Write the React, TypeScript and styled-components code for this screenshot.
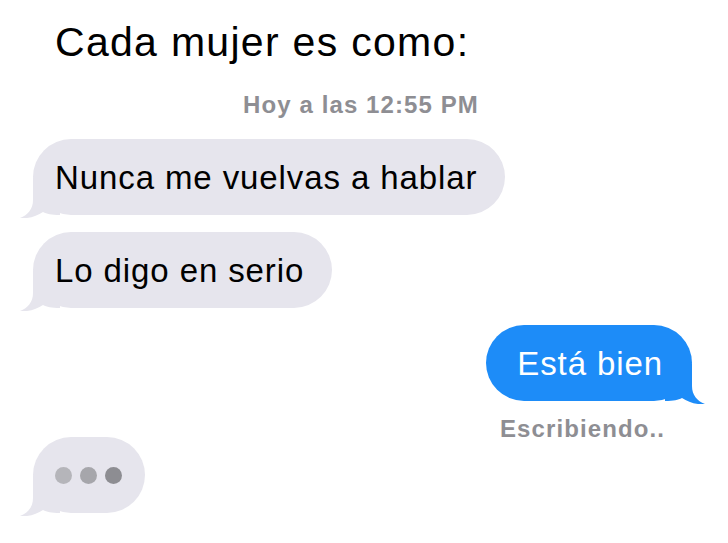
import styled, { createGlobalStyle } from "styled-components";

const GlobalStyle = createGlobalStyle`
  html, body {
    margin: 0;
    padding: 0;
    background: #ffffff;
  }
  body {
    font-family: "Liberation Sans", Arial, Helvetica, sans-serif;
  }
`;

const GRAY = "#e6e5ed";
const BLUE = "#1d8cf8";

type Side = "left" | "right";

const Page = styled.div`
  width: 728px;
  height: 543px;
  box-sizing: border-box;
  padding: 18px 0 0 0;
  display: flex;
  flex-direction: column;
  overflow: hidden;
`;

const Title = styled.h1`
  margin: 0 0 0 55px;
  font-size: 41px;
  font-weight: 400;
  letter-spacing: 1.3px;
  line-height: 48px;
  color: #000;
`;

const Stamp = styled.div`
  margin: 26px 0 21px 0;
  padding-right: 6px;
  text-align: center;
  font-size: 24px;
  font-weight: 700;
  letter-spacing: 1.1px;
  line-height: 26px;
  color: #8e8e93;
`;

const Row = styled.div<{ $side: Side; $gap?: number }>`
  display: flex;
  justify-content: ${(p) => (p.$side === "left" ? "flex-start" : "flex-end")};
  padding: ${(p) => (p.$side === "left" ? "0 0 0 33px" : "0 36px 0 0")};
  margin-bottom: ${(p) => p.$gap ?? 17}px;
`;

const Bubble = styled.div<{ $side: Side; $compact?: boolean }>`
  position: relative;
  height: 76px;
  box-sizing: border-box;
  display: inline-flex;
  align-items: center;
  padding: ${(p) =>
    p.$compact
      ? "0 23px 0 22px"
      : p.$side === "left"
        ? "0 28px 0 22px"
        : "0 29px 0 31px"};
  border-radius: 38px;
  background: ${(p) => (p.$side === "left" ? GRAY : BLUE)};
  color: ${(p) => (p.$side === "left" ? "#000" : "#fff")};
  font-size: 33px;
  letter-spacing: 0.9px;
  line-height: 1;
`;

const Tail = styled.svg<{ $side: Side }>`
  position: absolute;
  bottom: -3px;
  width: 40px;
  height: 40px;
  ${(p) =>
    p.$side === "left"
      ? "left: -13px;"
      : "right: -13px; transform: scaleX(-1);"}
`;

const Text = styled.span`
  position: relative;
`;

const Label = styled.div`
  align-self: flex-end;
  margin-right: 63px;
  font-size: 24px;
  font-weight: 700;
  letter-spacing: 1.1px;
  line-height: 22px;
  color: #8e8e93;
  margin-bottom: -3px;
`;

const Dots = styled.div`
  position: relative;
  display: flex;
  gap: 8px;
`;

const Dot = styled.span<{ $tone: string }>`
  width: 17px;
  height: 17px;
  border-radius: 50%;
  background: ${(p) => p.$tone};
`;

const TailShape = ({ side, color }: { side: Side; color: string }) => (
  <Tail $side={side} viewBox="0 0 40 40">
    <path
      d="M13 0 L13 22 C13 31 8 37 0 40 C9 41 17 38 23 34 C27 36 31 37 40 37 L40 0 Z"
      fill={color}
    />
  </Tail>
);

const Message = ({
  side,
  compact,
  children,
}: {
  side: Side;
  compact?: boolean;
  children: React.ReactNode;
}) => (
  <Bubble $side={side} $compact={compact}>
    <TailShape side={side} color={side === "left" ? GRAY : BLUE} />
    {compact ? children : <Text>{children}</Text>}
  </Bubble>
);

export default function App() {
  return (
    <>
      <GlobalStyle />
      <Page>
        <Title>Cada mujer es como:</Title>
        <Stamp>Hoy a las 12:55 PM</Stamp>
        <Row $side="left">
          <Message side="left">Nunca me vuelvas a hablar</Message>
        </Row>
        <Row $side="left">
          <Message side="left">Lo digo en serio</Message>
        </Row>
        <Row $side="right">
          <Message side="right">Está bien</Message>
        </Row>
        <Label>Escribiendo..</Label>
        <Row $side="left" $gap={0}>
          <Message side="left" compact>
            <Dots>
              <Dot $tone="#b5b5ba" />
              <Dot $tone="#a6a6ab" />
              <Dot $tone="#8d8d92" />
            </Dots>
          </Message>
        </Row>
      </Page>
    </>
  );
}
